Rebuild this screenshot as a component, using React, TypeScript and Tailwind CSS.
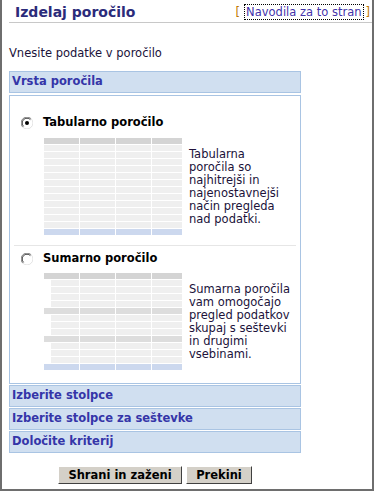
import React from 'react';

const Radio = ({ checked }: { checked?: boolean }) => (
  <svg width="12" height="12" viewBox="0 0 12 12" className="shrink-0">
    <circle cx="6" cy="6" r="5.5" fill="#fff" />
    <path d="M1.8 10.2A5.5 5.5 0 0 1 10.2 1.8" fill="none" stroke="#808080" strokeWidth="1" />
    <path d="M10.2 1.8A5.5 5.5 0 0 1 1.8 10.2" fill="none" stroke="#e2e2e2" strokeWidth="1" />
    <path d="M2.6 9.4A4.5 4.5 0 0 1 9.4 2.6" fill="none" stroke="#404040" strokeWidth="1" />
    {checked && <circle cx="6" cy="6" r="2" fill="#000" />}
  </svg>
);

type Row = { kind: 'head' | 'group' | 'row' | 'sub' | 'total' };

const Cells = ({ kind }: Row) => {
  const bg =
    kind === 'head'
      ? 'bg-[#d4d4d4]'
      : kind === 'group'
      ? 'bg-[#dddddd]'
      : kind === 'total'
      ? 'bg-[#ccd8ee]'
      : 'bg-[#efefef]';
  return (
    <div className="flex gap-px h-[6px]">
      {kind === 'sub' ? (
        <div className={`ml-[7px] w-[28px] ${bg}`} />
      ) : (
        <div className={`w-[35px] ${bg}`} />
      )}
      <div className={`w-[35px] ${bg}`} />
      <div className={`w-[35px] ${bg}`} />
      <div className={`w-[30px] ${bg}`} />
    </div>
  );
};

const tabularRows: Row[] = [
  { kind: 'head' },
  ...Array.from({ length: 12 }, () => ({ kind: 'row' as const })),
  { kind: 'total' },
];

const summaryRows: Row[] = [
  { kind: 'head' },
  { kind: 'sub' }, { kind: 'sub' }, { kind: 'sub' }, { kind: 'sub' },
  { kind: 'group' },
  { kind: 'sub' }, { kind: 'sub' }, { kind: 'sub' },
  { kind: 'group' },
  { kind: 'sub' }, { kind: 'sub' }, { kind: 'sub' },
  { kind: 'total' },
];

const SectionHead = ({ title }: { title: string }) => (
  <div className="h-[22px] border border-[#a9c4e3] bg-[#d0dff0] pl-[2px] flex items-center font-bold text-[#3535a8]">
    {title}
  </div>
);

const Option = ({
  label,
  checked,
  rows,
  lines,
  gap,
}: {
  label: string;
  checked?: boolean;
  rows: Row[];
  lines: string[];
  gap: string;
}) => (
  <div>
    <div className="flex items-center h-[14px] pl-[11px]">
      <Radio checked={checked} />
      <span className="ml-[10px] font-bold text-black">{label}</span>
    </div>
    <div className={`flex items-center pl-[34px] ${gap}`}>
      <div className="flex flex-col gap-px">
        {rows.map((r, i) => (
          <Cells key={i} kind={r.kind} />
        ))}
      </div>
      <p className="ml-[7px] leading-[13px] text-[#20123a] whitespace-nowrap">
        {lines.map((l, i) => (
          <span key={i} className="block">
            {l}
          </span>
        ))}
      </p>
    </div>
  </div>
);

export default function App() {
  return (
    <div className="w-[374px] h-[491px] bg-white border-x-2 border-b-2 border-[#6e6e6e] overflow-hidden font-['DejaVu_Sans',Verdana,sans-serif] text-[11.5px]">
      {/* Title bar */}
      <div className="ml-[7px] h-[23px] border-b border-[#c8c8c8] flex items-start">
        <h1 className="pl-[6px] pt-[4px] text-[14px] leading-[17px] font-bold text-[#2b2b7a]">
          Izdelaj poročilo
        </h1>
        <div className="ml-auto mr-[2px] pt-[5px] flex items-start whitespace-nowrap">
          <span className="text-[#c07800] leading-[15px]">[</span>
          <a className="ml-[5px] px-[1px] leading-[14px] outline-1 outline-dotted outline-black text-[#4433aa]">
            Navodila za to stran
          </a>
          <span className="ml-[3px] text-[#c07800] leading-[15px]">]</span>
        </div>
      </div>

      <div className="ml-[7px] w-[292px]">
        <p className="mt-[23px] leading-[14px] text-[#20123a]">Vnesite podatke v poročilo</p>

        <div className="mt-[11px]">
          <SectionHead title="Vrsta poročila" />
        </div>

        {/* Report type box */}
        <div className="mt-[2px] border border-[#a9c4e3] pt-[20px] pb-[13px]">
          <Option
            label="Tabularno poročilo"
            checked
            gap="mt-[8px]"
            rows={tabularRows}
            lines={['Tabularna', 'poročila so', 'najhitrejši in', 'najenostavnejši', 'način pregleda', 'nad podatki.']}
          />
          <div className="mx-[4px] mt-[10px] mb-[6px] border-t border-[#e6e6e6]" />
          <Option
            label="Sumarno poročilo"
            gap="mt-[7px]"
            rows={summaryRows}
            lines={['Sumarna poročila', 'vam omogočajo', 'pregled podatkov', 'skupaj s seštevki', 'in drugimi', 'vsebinami.']}
          />
        </div>

        <div className="mt-[1px] flex flex-col gap-[1px]">
          <SectionHead title="Izberite stolpce" />
          <SectionHead title="Izberite stolpce za seštevke" />
          <SectionHead title="Določite kriterij" />
        </div>

        <div className="mt-[13px] flex justify-center gap-[4px]">
          <button className="h-[18px] w-[124px] bg-[#d4d0c8] border border-t-white border-l-white border-r-[#404040] border-b-[#404040] font-bold text-black leading-[14px]">
            Shrani in zaženi
          </button>
          <button className="h-[18px] w-[66px] bg-[#d4d0c8] border border-t-white border-l-white border-r-[#404040] border-b-[#404040] font-bold text-black leading-[14px]">
            Prekini
          </button>
        </div>
      </div>
    </div>
  );
}
